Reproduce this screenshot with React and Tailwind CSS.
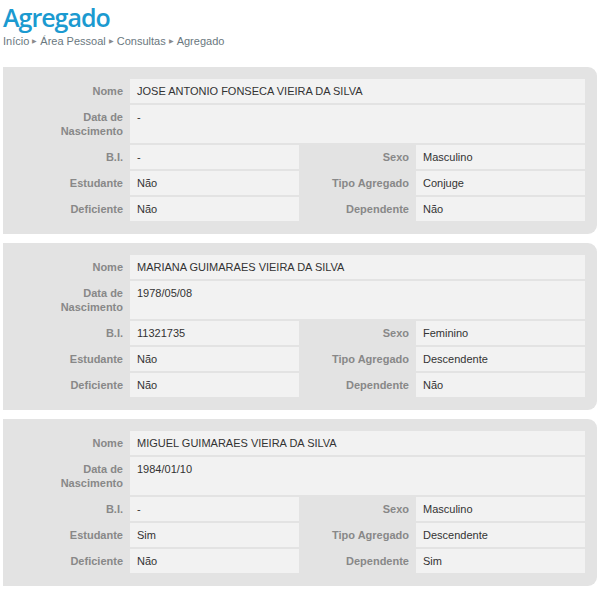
import React from "react";

const people = [
  { nome: "JOSE ANTONIO FONSECA VIEIRA DA SILVA", nasc: "-", bi: "-", sexo: "Masculino", estudante: "Não", tipo: "Conjuge", deficiente: "Não", dependente: "Não" },
  { nome: "MARIANA GUIMARAES VIEIRA DA SILVA", nasc: "1978/05/08", bi: "11321735", sexo: "Feminino", estudante: "Não", tipo: "Descendente", deficiente: "Não", dependente: "Não" },
  { nome: "MIGUEL GUIMARAES VIEIRA DA SILVA", nasc: "1984/01/10", bi: "-", sexo: "Masculino", estudante: "Sim", tipo: "Descendente", deficiente: "Não", dependente: "Sim" },
];

const Label = ({ children, w }) => (
  <div className={`${w} shrink-0 flex items-start justify-end pr-[7px] pt-[5px] text-right font-bold leading-[14px] text-[#888888]`}>
    {children}
  </div>
);

const Value = ({ children, w }) => (
  <div className={`${w} bg-[#f2f2f2] px-[7px] pt-[5px] leading-[14px] text-[#333333]`}>{children}</div>
);

function Card({ p }) {
  return (
    <div className="bg-[#e3e3e3] rounded-r-[9px] pt-[12px] pb-[13px] pr-[12px] flex flex-col gap-[2px]">
      <div className="flex h-[24px]">
        <Label w="w-[127px]">Nome</Label>
        <Value w="flex-1">{p.nome}</Value>
      </div>
      <div className="flex h-[38px]">
        <Label w="w-[127px]">Data de<br />Nascimento</Label>
        <Value w="flex-1">{p.nasc}</Value>
      </div>
      {[
        ["B.I.", p.bi, "Sexo", p.sexo],
        ["Estudante", p.estudante, "Tipo Agregado", p.tipo],
        ["Deficiente", p.deficiente, "Dependente", p.dependente],
      ].map((r) => (
        <div key={r[0]} className="flex h-[24px]">
          <Label w="w-[127px]">{r[0]}</Label>
          <Value w="w-[169px]">{r[1]}</Value>
          <Label w="w-[117px]">{r[2]}</Label>
          <Value w="flex-1">{r[3]}</Value>
        </div>
      ))}
    </div>
  );
}

export default function App() {
  return (
    <div className="w-[603px] h-[590px] bg-white overflow-hidden text-[11px]" style={{ fontFamily: "'Liberation Sans', sans-serif" }}>
      <div className="pl-[3px]">
        <h1 className="pt-[1px] text-[25px] leading-[32px] font-semibold tracking-[-1px] text-[#1b9ad0]" style={{ fontFamily: "'Open Sans', 'Liberation Sans', sans-serif" }}>
          Agregado
        </h1>
        <div className="flex items-center pt-[1px] text-[11px] leading-[14px] text-[#6a7880]">
          {["Início", "Área Pessoal", "Consultas", "Agregado"].map((t, i) => (
            <React.Fragment key={t}>
              {i > 0 && <span className="mx-[3px] text-[6px] text-[#8a8a8a]">▶</span>}
              <span>{t}</span>
            </React.Fragment>
          ))}
        </div>
      </div>
      <div className="mt-[19px] ml-[3px] w-[594px] flex flex-col gap-[9px]">
        {people.map((p) => (
          <Card key={p.nome} p={p} />
        ))}
      </div>
    </div>
  );
}
